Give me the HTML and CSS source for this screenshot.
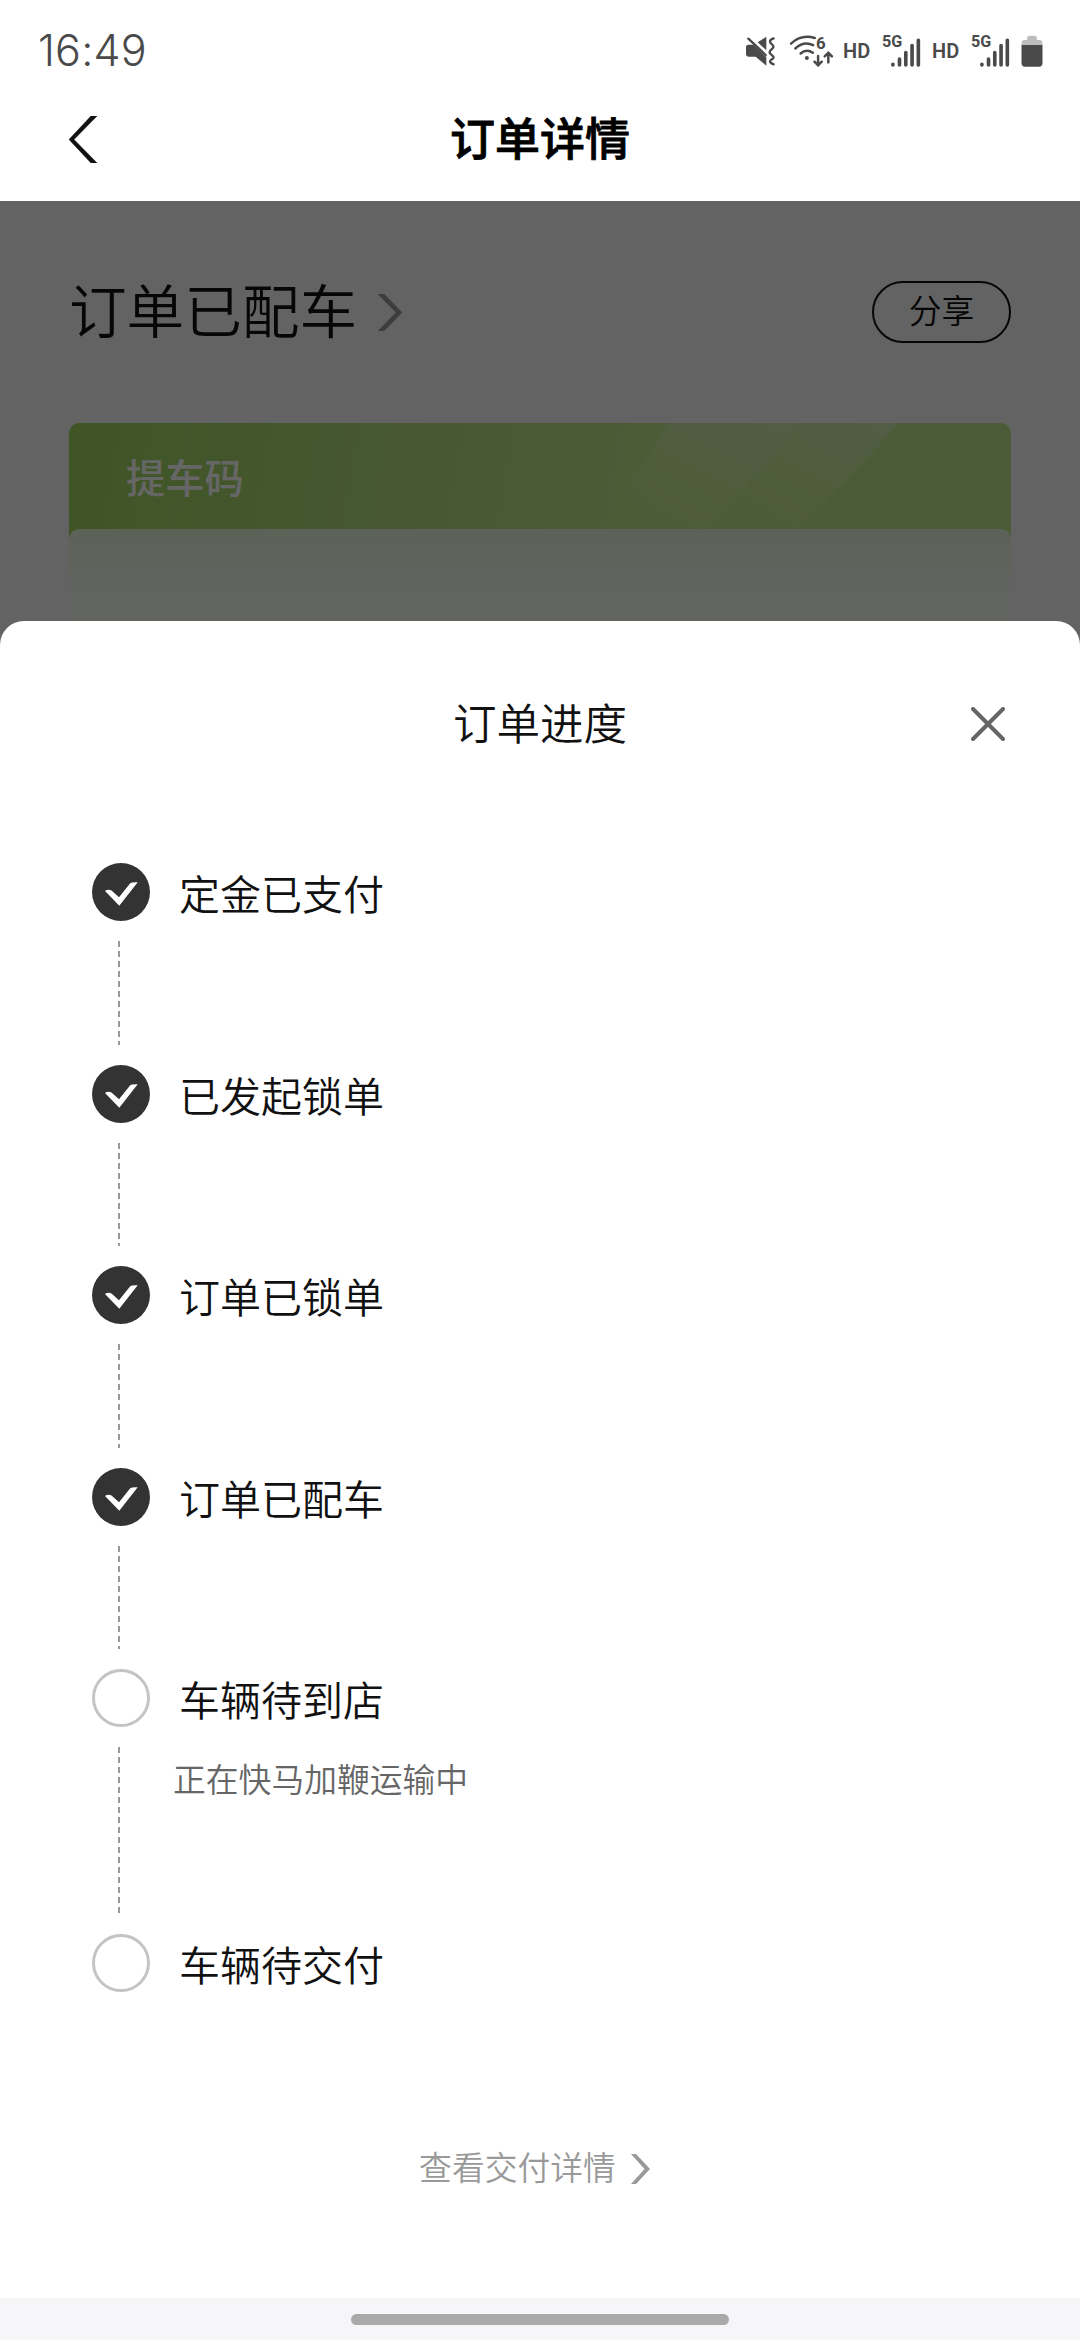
FILE: index.html
```html
<!DOCTYPE html>
<html lang="zh-CN">
<head>
    <meta charset="UTF-8">
    <meta name="viewport" content="width=device-width, initial-scale=1.0">
    <title>订单详情</title>
    <link rel="stylesheet" href="styles.css">
</head>
<body>

    <!-- 状态栏 -->
    <div class="status-bar">
        <span class="time">16:49</span>
        <div class="status-icons">
            <svg class="icon-mute" viewBox="70 44 93 93">
                <path d="M73 79 Q73 73 80 73 H95 L134 110 V136 L102 109 H80 Q73 109 73 102 Z" fill="#4a4a4a"/>
                <path d="M108 66 L134 49 V90 Z" fill="#4a4a4a"/>
                <path d="M80 55 L132 104" stroke="#4a4a4a" stroke-width="7" stroke-linecap="round"/>
                <path d="M156 54 C140 60 144 67 151 72 C158 78 156 82 149 88 C142 94 142 98 149 103 C158 110 158 114 149 118 C142 123 145 128 156 132" fill="none" stroke="#4a4a4a" stroke-width="7" stroke-linecap="round"/>
            </svg>
            <svg class="icon-wifi" viewBox="203 42 136 100">
                <g fill="none" stroke="#4a4a4a" stroke-width="7.5" stroke-linecap="round">
                    <path d="M209 71 Q240 42 281 54"/>
                    <path d="M222 86 Q248 62 276 76"/>
                    <path d="M238 101 Q256 86 275 99"/>
                    <path d="M291 109 V135 M280 126 L291 137 L302 126"/>
                    <path d="M322 128 V100 M311 110 L322 99 L333 110"/>
                </g>
                <circle cx="257" cy="115" r="6" fill="#4a4a4a"/>
                <text class="glyph" x="285" y="86" font-size="51">6</text>
            </svg>
            <span class="hd">HD</span>
            <svg class="icon-signal" viewBox="484 36 118 106">
                <text class="glyph" x="484" y="82" font-size="49">5G</text>
                <g stroke="#4a4a4a" stroke-width="11" stroke-linecap="round">
                    <path d="M517 134 V136 M537 118 V136 M556 98 V136 M575 77 V136 M594 61 V136"/>
                </g>
            </svg>
            <span class="hd">HD</span>
            <svg class="icon-signal" viewBox="484 36 118 106">
                <text class="glyph" x="484" y="82" font-size="49">5G</text>
                <g stroke="#4a4a4a" stroke-width="11" stroke-linecap="round">
                    <path d="M517 134 V136 M537 118 V136 M556 98 V136 M575 77 V136 M594 61 V136"/>
                </g>
            </svg>
            <svg class="icon-battery" viewBox="899 45 65 96">
                <path d="M900 76 V70 Q900 60 910 60 H917 V53 Q917 47 923 47 H940 Q946 47 946 53 V60 H953 Q963 60 963 70 V76 Z" fill="#bdbdbd"/>
                <path d="M900 75 H963 V129 Q963 140 952 140 H911 Q900 140 900 129 Z" fill="#4a4a4a"/>
            </svg>
        </div>
    </div>

    <!-- 导航栏 -->
    <header class="nav">
        <svg class="icon-back" viewBox="0 0 28 47"><path d="M0 23.5 L22 0 H28 L5 23.5 L28 47 H22 Z" fill="#111" stroke="#111" stroke-width="0.5"/></svg>
        <h1 class="nav-title">订单详情</h1>
    </header>

    <!-- 页面内容 -->
    <main class="page">
        <div class="order-head">
            <h2 class="order-status">订单已配车</h2>
            <svg class="icon-more" viewBox="0 0 24 37"><path d="M0 0 H6 L24 18.5 L6 37 H0 L18 18.5 Z" fill="#999" stroke="#999" stroke-width="0.6"/></svg>
            <button class="share-btn" type="button">分享</button>
        </div>
        <div class="code-card">
            <svg class="card-shine" viewBox="0 0 942 120">
                <defs>
                    <linearGradient id="shine" x1="0" y1="1" x2="1" y2="0">
                        <stop offset="0.2" stop-color="#fff" stop-opacity="0"/>
                        <stop offset="1" stop-color="#e8f0ff" stop-opacity="0.3"/>
                    </linearGradient>
                </defs>
                <path d="M600 0 H731 L640 106 H530 Z" fill="url(#shine)"/>
                <path d="M731 0 H831 L730 106 H640 Z" fill="url(#shine)"/>
            </svg>
            <div class="card-title">提车码</div>
            <div class="card-panel"></div>
        </div>
        <div class="mask"></div>
    </main>

    <!-- 订单进度弹层 -->
    <section class="sheet">
        <div class="sheet-head">
            <h3 class="sheet-title">订单进度</h3>
            <svg class="icon-close" viewBox="0 0 34 34"><path d="M2 2 L32 32 M32 2 L2 32" stroke="#666" stroke-width="4" stroke-linecap="round"/></svg>
        </div>

        <ul class="steps">
            <li class="step">
                <div class="step-mark">
                    <svg class="dot" viewBox="0 0 58 58"><circle cx="29" cy="29" r="29" fill="#333"/><path d="M13 28 Q16 26 19.5 27.5 L27 34.3 L38 20.5 Q39.5 19 45.7 19.3 L27.3 42.7 Z" fill="#fff"/></svg>
                    <div class="line"></div>
                </div>
                <div class="step-text"><p class="step-name">定金已支付</p></div>
            </li>
            <li class="step">
                <div class="step-mark">
                    <svg class="dot" viewBox="0 0 58 58"><circle cx="29" cy="29" r="29" fill="#333"/><path d="M13 28 Q16 26 19.5 27.5 L27 34.3 L38 20.5 Q39.5 19 45.7 19.3 L27.3 42.7 Z" fill="#fff"/></svg>
                    <div class="line"></div>
                </div>
                <div class="step-text"><p class="step-name">已发起锁单</p></div>
            </li>
            <li class="step">
                <div class="step-mark">
                    <svg class="dot" viewBox="0 0 58 58"><circle cx="29" cy="29" r="29" fill="#333"/><path d="M13 28 Q16 26 19.5 27.5 L27 34.3 L38 20.5 Q39.5 19 45.7 19.3 L27.3 42.7 Z" fill="#fff"/></svg>
                    <div class="line"></div>
                </div>
                <div class="step-text"><p class="step-name">订单已锁单</p></div>
            </li>
            <li class="step">
                <div class="step-mark">
                    <svg class="dot" viewBox="0 0 58 58"><circle cx="29" cy="29" r="29" fill="#333"/><path d="M13 28 Q16 26 19.5 27.5 L27 34.3 L38 20.5 Q39.5 19 45.7 19.3 L27.3 42.7 Z" fill="#fff"/></svg>
                    <div class="line"></div>
                </div>
                <div class="step-text"><p class="step-name">订单已配车</p></div>
            </li>
            <li class="step step-current">
                <div class="step-mark">
                    <div class="dot dot-empty"></div>
                    <div class="line"></div>
                </div>
                <div class="step-text">
                    <p class="step-name">车辆待到店</p>
                    <p class="step-desc">正在快马加鞭运输中</p>
                </div>
            </li>
            <li class="step">
                <div class="step-mark">
                    <div class="dot dot-empty"></div>
                </div>
                <div class="step-text"><p class="step-name">车辆待交付</p></div>
            </li>
        </ul>

        <div class="detail-link">
            <span>查看交付详情</span>
            <svg class="icon-detail" viewBox="0 0 19 30"><path d="M0 0 H5 L19 15 L5 30 H0 L13.5 15 Z" fill="#999"/></svg>
        </div>

        <div class="home-bar"><div class="home-pill"></div></div>
    </section>

</body>
</html>
```
FILE: styles.css
```css
* {
    box-sizing: border-box;
    margin: 0;
    padding: 0;
}

body {
    position: relative;
    width: 1080px;
    height: 2340px;
    overflow: hidden;
    background: #fff;
    color: #111;
    font-family: "Noto Sans CJK SC", sans-serif;
    font-weight: 350;
}

svg {
    display: block;
    flex: none;
}

h1, h2, h3 {
    font-weight: 350;
}

/* 状态栏 */
.status-bar {
    display: flex;
    justify-content: space-between;
    height: 100px;
    padding: 0 37px 0 38px;
}

.time {
    padding-top: 24px;
    font-family: Inter, sans-serif;
    font-size: 43px;
    font-weight: 300;
    line-height: 52px;
    letter-spacing: 0.2px;
    color: #4a4a4a;
}

.status-icons {
    display: flex;
    align-items: flex-start;
    padding-top: 32px;
}

.icon-mute {
    width: 31px;
    height: 31px;
    margin: 3px 13px 0 0;
}

.icon-wifi {
    width: 45px;
    height: 33px;
    margin: 2px 9px 0 0;
}

.glyph {
    font-family: Roboto, sans-serif;
    font-weight: 700;
    fill: #4a4a4a;
}

.hd {
    width: 28px;
    margin: 7px 11px 0 0;
    font-family: Roboto, sans-serif;
    font-size: 20px;
    font-weight: 600;
    line-height: 24px;
    color: #4a4a4a;
}

.icon-signal {
    width: 39px;
    height: 35px;
    margin-right: 11px;
    overflow: visible;
}

.icon-battery {
    width: 22px;
    height: 32px;
    margin-top: 3px;
}

/* 导航栏 */
.nav {
    display: grid;
    grid-template-columns: 28px 1fr 28px;
    align-items: center;
    height: 101px;
    padding: 0 69px 23px;
}

.icon-back {
    width: 28px;
    height: 47px;
}

.nav-title {
    padding-bottom: 5px;
    text-align: center;
    font-size: 45px;
    font-weight: 500;
    line-height: 60px;
    color: #000;
    -webkit-text-stroke: 0.8px #000;
}

/* 页面内容 */
.page {
    position: relative;
    height: 460px;
    padding: 80px 69px 0;
    background: #f7f7f7;
    overflow: hidden;
}

.order-head {
    display: flex;
    align-items: center;
    height: 62px;
}

.order-status {
    padding-bottom: 8px;
    font-size: 57.6px;
    line-height: 62px;
}

.icon-more {
    width: 24px;
    height: 37px;
    margin-left: 21px;
}

.share-btn {
    width: 139px;
    height: 62px;
    margin-left: auto;
    padding-bottom: 6px;
    border: 2px solid #111;
    border-radius: 31px;
    background: none;
    color: #111;
    font-family: inherit;
    font-size: 32.7px;
    font-weight: 350;
    line-height: 52px;
}

.code-card {
    position: relative;
    height: 300px;
    margin-top: 80px;
    border-radius: 10px;
    background: linear-gradient(100deg, #9dd45f 0, #b2dc7b 35%, #c0e68c 60%, #c0e68c 100%);
    overflow: hidden;
}

.card-shine {
    position: absolute;
    top: 0;
    left: 0;
    width: 942px;
    height: 120px;
}

.card-title {
    height: 106px;
    padding-left: 57px;
    font-size: 39.3px;
    font-weight: 500;
    line-height: 106px;
    color: #fff;
}

.card-panel {
    position: relative;
    height: 194px;
    border-radius: 10px 10px 0 0;
    background: linear-gradient(#e6f5dc 0, #f2f9ea 45px, #f5f9f0 90px, #f7f7f7 150px);
}

.mask {
    position: absolute;
    inset: 0;
    background: rgba(0, 0, 0, 0.6);
}

/* 弹层 */
.sheet {
    position: absolute;
    left: 0;
    right: 0;
    top: 621px;
    bottom: 0;
    display: flex;
    flex-direction: column;
    border-radius: 24px 24px 0 0;
    background: #fff;
    overflow: hidden;
}

.sheet-head {
    display: grid;
    grid-template-columns: 34px 1fr 34px;
    align-items: center;
    height: 242px;
    padding: 0 75px 36px;
}

.sheet-title {
    grid-column: 2;
    padding-bottom: 5px;
    text-align: center;
    font-size: 43.5px;
    line-height: 60px;
}

.icon-close {
    width: 34px;
    height: 34px;
}

/* 进度列表 */
.steps {
    list-style: none;
    padding-left: 92px;
}

.step {
    display: flex;
    height: 201.5px;
}

.step-current {
    height: 265px;
}

.step-mark {
    display: flex;
    flex-direction: column;
    width: 58px;
}

.dot {
    flex: none;
    width: 58px;
    height: 58px;
}

.dot-empty {
    border: 3px solid #c4c4c4;
    border-radius: 50%;
}

.line {
    flex: 1;
    width: 2px;
    margin: 20px 0 20px 26px;
    background: repeating-linear-gradient(#999 0, #999 6px, transparent 6px, transparent 10px);
}

.step-text {
    padding-left: 29px;
}

.step-name {
    font-size: 41px;
    line-height: 58px;
}

.step-desc {
    margin: 27px 0 0 -6px;
    font-size: 32.8px;
    line-height: 48px;
    color: #666;
}

.detail-link {
    display: flex;
    justify-content: center;
    align-items: center;
    gap: 15px;
    margin-top: 6px;
    padding-right: 11px;
    font-size: 32.8px;
    line-height: 48px;
    color: #999;
}

.icon-detail {
    width: 19px;
    height: 30px;
    margin-top: 7px;
}

/* 底部手势条 */
.home-bar {
    height: 42px;
    margin-top: auto;
    padding-top: 16px;
    background: #f6f6f8;
}

.home-pill {
    width: 378px;
    height: 11px;
    margin: 0 auto;
    border-radius: 6px;
    background: #aaa;
}
```
